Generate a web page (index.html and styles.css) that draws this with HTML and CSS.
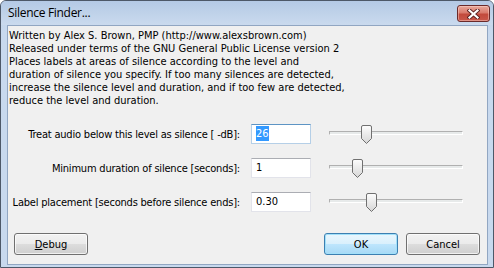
FILE: index.html
```html
<!DOCTYPE html>
<html lang="en">
<head>
    <meta charset="UTF-8">
    <title>Silence Finder...</title>
    <link rel="stylesheet" href="styles.css">
</head>
<body>
    <div class="window">
        <div class="titlebar">
            <span class="title">Silence Finder...</span>
            <button class="close" aria-label="Close">
                <svg width="13" height="10" viewBox="0 0 13 10">
                    <path d="M2.5 1.5 L10.5 8.5 M10.5 1.5 L2.5 8.5" stroke="#5a2020" stroke-width="4" stroke-linecap="square"/>
                    <path d="M2.5 1.5 L10.5 8.5 M10.5 1.5 L2.5 8.5" stroke="#ffffff" stroke-width="2.2" stroke-linecap="square"/>
                </svg>
            </button>
        </div>

        <div class="frame">
            <div class="client">
                <p class="intro">
                    Written by Alex S. Brown, PMP (http://www.alexsbrown.com)<br>
                    Released under terms of the GNU General Public License version 2<br>
                    Places labels at areas of silence according to the level and<br>
                    duration of silence you specify. If too many silences are detected,<br>
                    increase the silence level and duration, and if too few are detected,<br>
                    reduce the level and duration.
                </p>

                <div class="controls">
                    <label class="field-label">Treat audio below this level as silence [ -dB]:</label>
                    <div class="textbox focused"><span class="selected">26</span></div>
                    <div class="slider">
                        <div class="track"></div>
                        <span class="thumb" style="left: 32px"></span>
                    </div>

                    <label class="field-label">Minimum duration of silence [seconds]:</label>
                    <div class="textbox">1</div>
                    <div class="slider">
                        <div class="track"></div>
                        <span class="thumb" style="left: 23px"></span>
                    </div>

                    <label class="field-label">Label placement [seconds before silence ends]:</label>
                    <div class="textbox">0.30</div>
                    <div class="slider">
                        <div class="track"></div>
                        <span class="thumb" style="left: 37px"></span>
                    </div>
                </div>

                <div class="buttons">
                    <button class="btn"><u>D</u>ebug</button>
                    <div class="spacer"></div>
                    <button class="btn default">OK</button>
                    <button class="btn">Cancel</button>
                </div>
            </div>
        </div>
    </div>
</body>
</html>
```

FILE: styles.css
```css
* {
    margin: 0;
    padding: 0;
    box-sizing: border-box;
}

body {
    background: #ffffff;
    font-family: "DejaVu Sans Condensed", "Liberation Sans", sans-serif;
    font-size: 11px;
    color: #000;
}

.window {
    width: 494px;
    height: 268px;
    border: 1px solid #4d5868;
    border-radius: 6px 6px 0 0;
    background: linear-gradient(#afc5e2 0px, #c3d5eb 20px, #c8d9ee 30px);
    display: flex;
    flex-direction: column;
}

.titlebar {
    height: 24px;
    display: flex;
    justify-content: space-between;
    align-items: flex-start;
    border-radius: 5px 5px 0 0;
    background: linear-gradient(#b4c9e5, #bfd2e9 50%, #cadaee);
}

.title {
    font-family: "Open Sans", "Noto Sans", sans-serif;
    font-size: 12px;
    letter-spacing: -0.3px;
    line-height: 16px;
    padding: 4px 0 0 7px;
    color: #000;
}

.close {
    width: 33px;
    height: 17px;
    margin: 4px 3px 0 0;
    border: 1px solid #6b2a2a;
    border-radius: 3px;
    background: linear-gradient(#e9a99b 0%, #d97a6c 45%, #c24a3c 55%, #c9574a 100%);
    box-shadow: inset 0 0 0 1px rgba(255, 220, 210, 0.45);
    display: flex;
    align-items: center;
    justify-content: center;
}

.frame {
    flex: 1;
    padding: 0 5px 2px 6px;
    display: flex;
}

.client {
    flex: 1;
    background: #f0f0f0;
    border: 1px solid #91a6c2;
    display: flex;
    flex-direction: column;
}

.intro {
    padding: 3px 0 0 1px;
    line-height: 13px;
    white-space: nowrap;
}

.controls {
    margin-top: 17px;
    display: grid;
    grid-template-columns: 232px 60px 134px;
    grid-auto-rows: 20px;
    column-gap: 11px;
    row-gap: 14px;
    align-items: center;
}

.controls .slider {
    margin-left: 7px;
}

.field-label {
    text-align: right;
    white-space: nowrap;
    letter-spacing: -0.2px;
}

.textbox {
    height: 20px;
    background: #fff;
    border: 1px solid #e2e3ea;
    border-top-color: #abadb3;
    padding: 0 4px;
    line-height: 18px;
}

.textbox.focused {
    border-color: #b5cfe7;
    border-top-color: #5d94c4;
}

.selected {
    background: #3399ff;
    color: #fff;
    padding: 1px 0;
}

.slider {
    position: relative;
    width: 134px;
    height: 20px;
}

.track {
    margin-top: 7px;
    height: 4px;
    background: #e7eaea;
    border: 1px solid #b0b0b0;
    border-bottom-color: #ffffff;
    border-right-color: #ffffff;
}

.thumb {
    position: absolute;
    top: 1px;
    width: 11px;
    height: 19px;
    background:
        url("data:image/svg+xml,%3Csvg xmlns='http://www.w3.org/2000/svg' width='11' height='19'%3E%3Cdefs%3E%3ClinearGradient id='g' x1='0' x2='0' y1='0' y2='1'%3E%3Cstop offset='0' stop-color='%23fdfdfd'/%3E%3Cstop offset='1' stop-color='%23d6d6d6'/%3E%3C/linearGradient%3E%3C/defs%3E%3Cpath d='M2 0.5 H9 Q10.5 0.5 10.5 2 V13.5 L5.5 18.5 L0.5 13.5 V2 Q0.5 0.5 2 0.5 Z' fill='url(%23g)' stroke='%23707070'/%3E%3C/svg%3E") no-repeat;
}

.buttons {
    margin-top: 21px;
    display: flex;
    gap: 8px;
    padding: 0 7px 0 6px;
}

.spacer {
    flex: 1;
}

.btn {
    width: 74px;
    height: 22px;
    font-family: inherit;
    font-size: 11px;
    color: #000;
    border: 1px solid #707070;
    border-radius: 3px;
    background: linear-gradient(#f2f2f2 0%, #ebebeb 50%, #dddddd 50%, #cfcfcf 100%);
    box-shadow: inset 0 0 0 1px rgba(255, 255, 255, 0.7);
}

.btn.default {
    border-color: #3c7fb1;
    background: linear-gradient(#eaf6fd 0%, #d9f0fc 50%, #bee6fd 50%, #a7d9f5 100%);
    box-shadow: inset 0 0 0 1px #a2e0f9;
}
```
